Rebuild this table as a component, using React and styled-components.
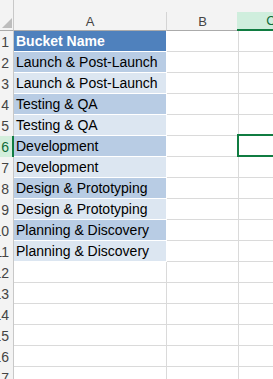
import styled, { createGlobalStyle, css } from 'styled-components'

const GlobalStyle = createGlobalStyle`
  html, body {
    margin: 0;
    padding: 0;
    background: #ffffff;
    overflow: hidden;
  }
  body {
    font-family: "Liberation Sans", Arial, sans-serif;
  }
`

const buckets = [
  'Launch & Post-Launch',
  'Launch & Post-Launch',
  'Testing & QA',
  'Testing & QA',
  'Development',
  'Development',
  'Design & Prototyping',
  'Design & Prototyping',
  'Planning & Discovery',
  'Planning & Discovery',
]

const TOTAL_ROWS = 17
const ACTIVE_ROW = 6

function App() {
  const rows = []
  for (let n = 1; n <= TOTAL_ROWS; n++) {
    let value = ''
    let fill = null
    if (n === 1) {
      value = 'Bucket Name'
      fill = 'head'
    } else if (n - 2 < buckets.length) {
      value = buckets[n - 2]
      fill = n % 2 === 0 ? 'dark' : 'light'
    }
    rows.push({ n, value, fill })
  }

  return (
    <>
      <GlobalStyle />
      <Sheet>
        <TopStrip>
          <Corner />
          <div />
        </TopStrip>
        <HeaderRow>
          <CornerTail />
          <ColHead>A</ColHead>
          <ColHead>B</ColHead>
          <ColHead active>C</ColHead>
        </HeaderRow>
        {rows.map(r => (
          <Row key={r.n}>
            <RowHead active={r.n === ACTIVE_ROW}>
              <span>{r.n}</span>
            </RowHead>
            <Cell fill={r.fill}>{r.value}</Cell>
            <Cell />
            <Cell>{r.n === ACTIVE_ROW && <Selection />}</Cell>
          </Row>
        ))}
      </Sheet>
    </>
  )
}

export default App

const cols = '14px 153px 72px 66px'

const Sheet = styled.div`
  width: 273px;
  height: 379px;
  overflow: hidden;
  display: flex;
  flex-direction: column;
`

const TopStrip = styled.div`
  display: grid;
  grid-template-columns: 14px 1fr;
  height: 12px;
  flex: none;
  background: #f3f3f3;
`

const Corner = styled.div`
  border-right: 1px solid #c8c8c8;
`

const HeaderRow = styled.div`
  display: grid;
  grid-template-columns: ${cols};
  height: 19px;
  flex: none;
  background: #f3f3f3;
`

// select-all triangle in the corner
const CornerTail = styled.div`
  position: relative;
  border-right: 1px solid #c8c8c8;
  border-bottom: 1px solid #ababab;
  &::after {
    content: '';
    position: absolute;
    right: 1px;
    bottom: 2px;
    border-style: solid;
    border-width: 0 0 10px 10px;
    border-color: transparent transparent #bdbdbd transparent;
  }
`

const ColHead = styled.div`
  display: flex;
  align-items: center;
  justify-content: center;
  font-size: 13px;
  color: #444444;
  border-right: 1px solid #d4d4d4;
  border-bottom: 1px solid #ababab;
  ${props => props.active && css`
    margin-left: -2px;
    background: #cfeedd;
    color: #0f6b39;
    border-bottom: 2px solid #107c41;
    border-right: none;
  `}
`

const Row = styled.div`
  display: grid;
  grid-template-columns: ${cols};
  height: 21px;
  flex: none;
`

const RowHead = styled.div`
  background: #f3f3f3;
  border-right: 1px solid #c8c8c8;
  font-size: 14px;
  color: #444444;
  overflow: hidden;
  display: flex;
  align-items: center;
  justify-content: flex-end;
  padding-right: 4px;
  white-space: nowrap;
  ${props => props.active && css`
    background: #d3eedc;
    color: #0f6b39;
    border-right: 2px solid #107c41;
    padding-right: 3px;
  `}
`

const fills = {
  head: '#4f81bd',
  dark: '#b8cce4',
  light: '#dce6f1',
}

const Cell = styled.div`
  position: relative;
  display: flex;
  align-items: center;
  padding-left: 2px;
  font-size: 14px;
  color: #000000;
  white-space: nowrap;
  border-right: 1px solid #dadada;
  border-bottom: 1px solid #dadada;
  ${props => props.fill && css`
    background: ${fills[props.fill]};
    border-right-color: #ffffff;
    border-bottom-color: #ffffff;
  `}
  ${props => props.fill === 'head' && css`
    color: #ffffff;
    font-weight: bold;
  `}
`

const Selection = styled.div`
  position: absolute;
  top: -2px;
  left: -2px;
  right: -20px;
  bottom: -1px;
  border: 2px solid #107c41;
  pointer-events: none;
`
